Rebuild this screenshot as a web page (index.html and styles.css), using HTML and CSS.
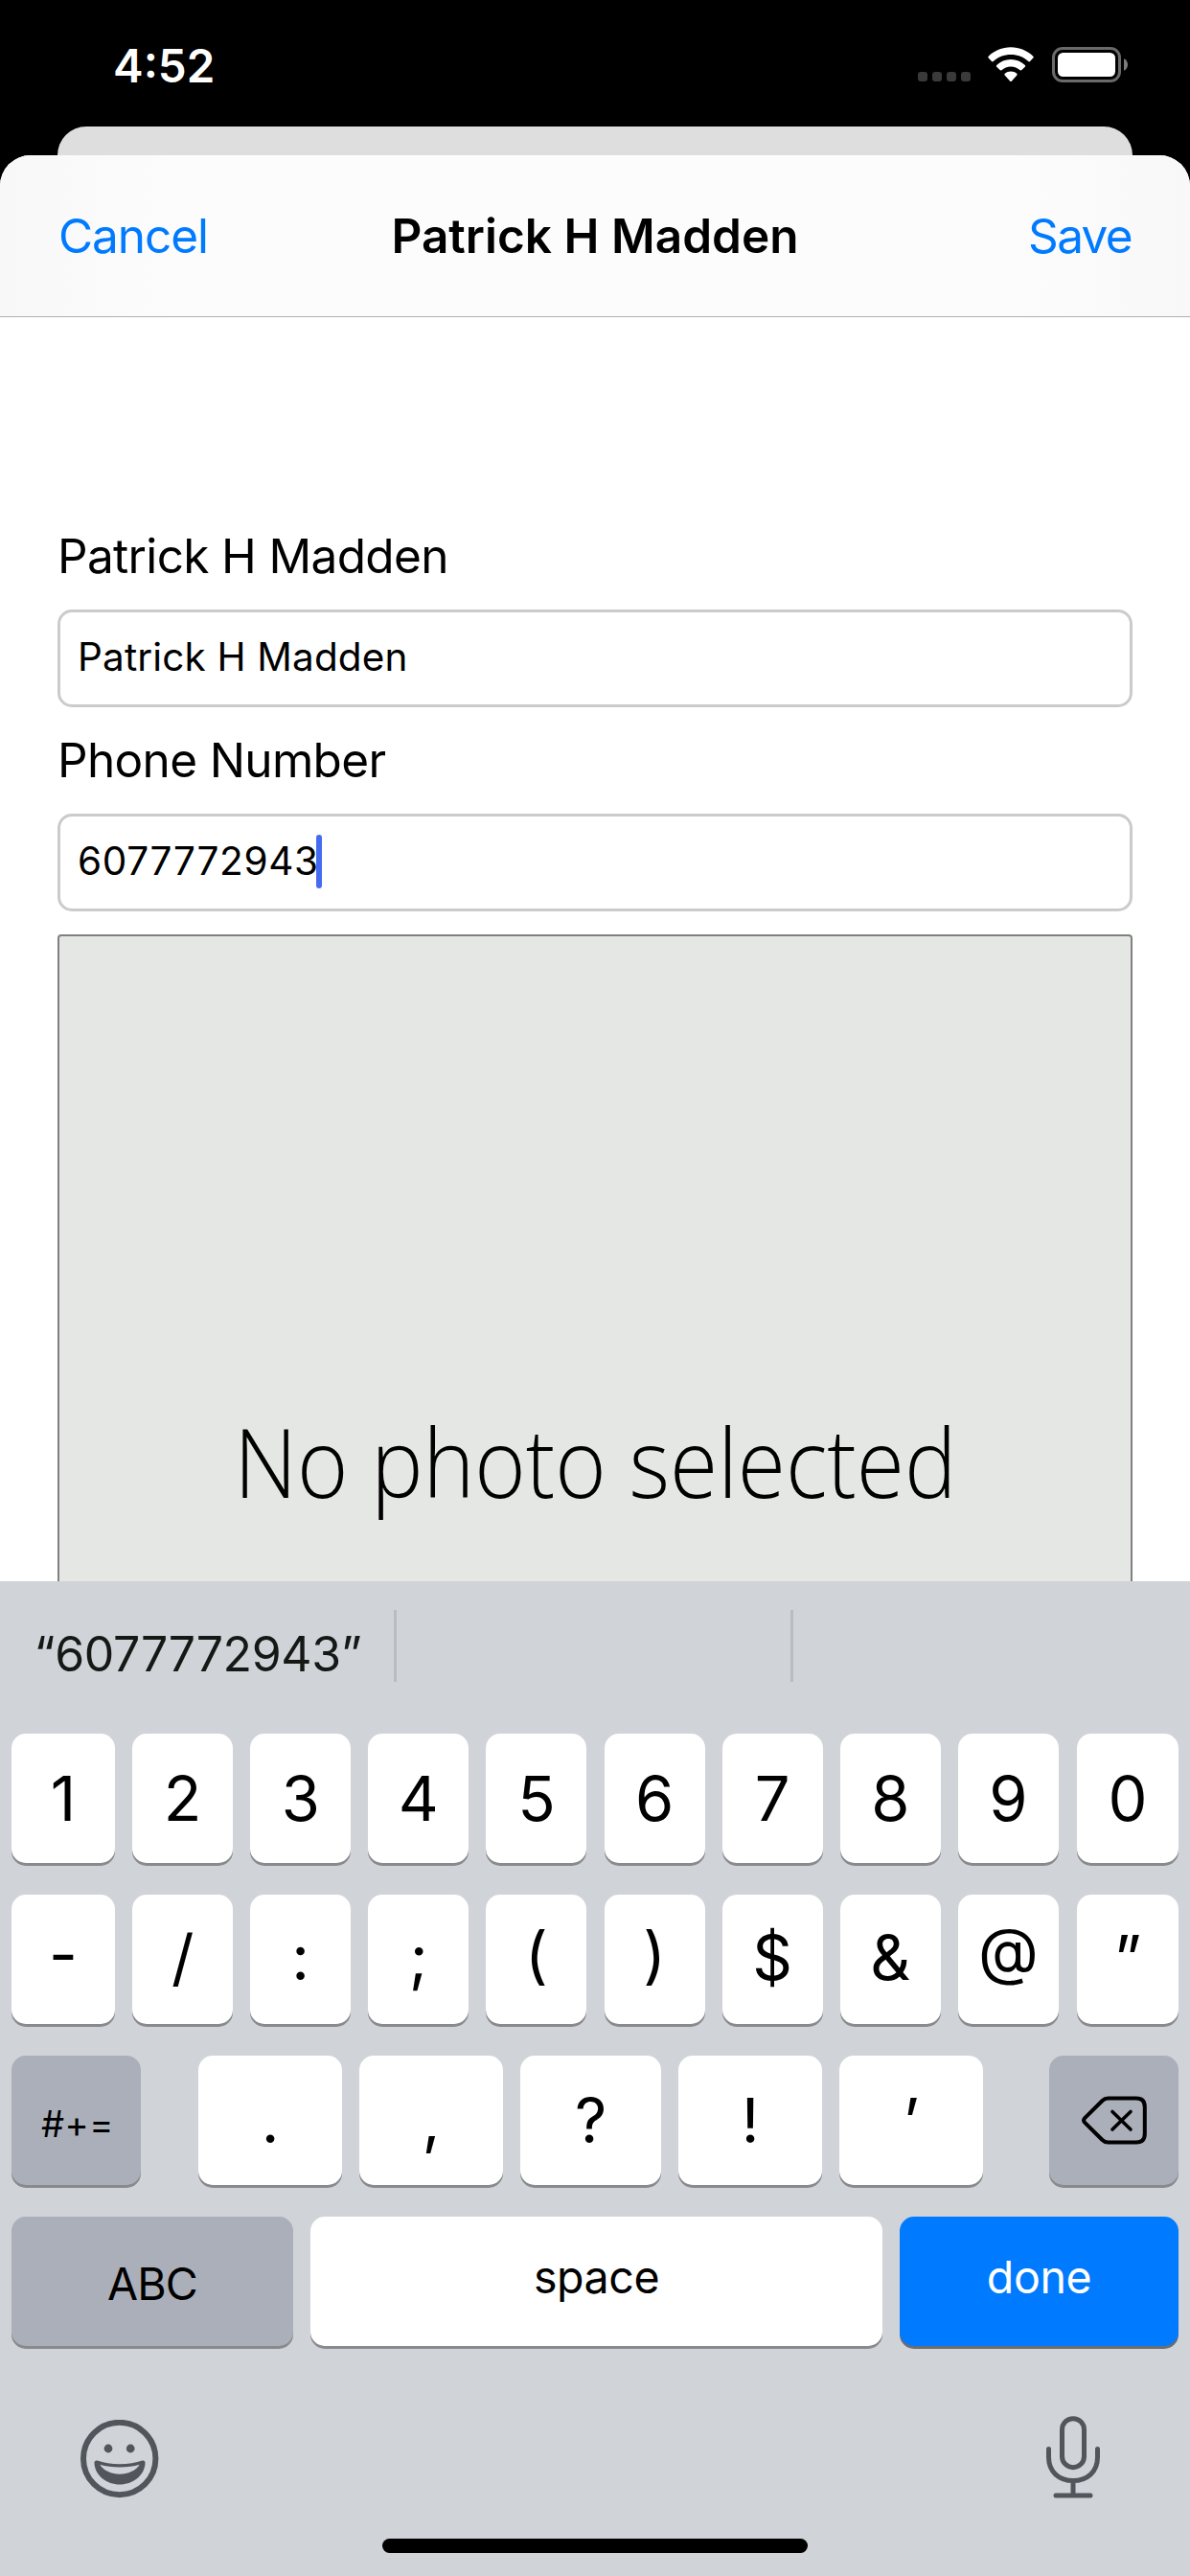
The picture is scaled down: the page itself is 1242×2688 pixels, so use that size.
FILE: index.html
```html
<!DOCTYPE html>
<html lang="en">
<head>
<meta charset="utf-8">
<title>Patrick H Madden</title>
<link rel="stylesheet" href="styles.css">
</head>
<body>
<div class="screen">
  <header class="status">
    <span class="time">4:52</span>
    <div class="indicators">
      <div class="dots"><i></i><i></i><i></i><i></i></div>
      <svg class="wifi" viewBox="0 0 48 37" width="48" height="37" fill="#fff">
        <path d="M24 0.3C33 0.3 41.300 3.900 47.300 9.700Q48.200 10.600 47.300 11.500L44 15Q43.200 15.800 42.300 15C37.500 10.600 31 8 24 8S10.500 10.600 5.700 15Q4.800 15.800 4 15L0.700 11.500Q-0.200 10.600 0.700 9.700C6.700 3.900 15 0.300 24 0.300Z"/>
        <path d="M24 13C29.700 13 34.900 15.200 38.800 18.900Q39.700 19.800 38.800 20.700L35.400 24.100Q34.500 25 33.600 24.200C31 21.900 27.700 20.500 24 20.500S17 21.900 14.400 24.200Q13.500 25 12.600 24.100L9.200 20.700Q8.300 19.800 9.200 18.900C13.100 15.200 18.300 13 24 13Z"/>
        <path d="M24 25.600C26.300 25.600 28.500 26.400 30.200 27.700Q31.200 28.600 30.300 29.600L24.800 35.700Q24 36.500 23.200 35.700L17.700 29.600Q16.800 28.600 17.800 27.700C19.500 26.400 21.700 25.600 24 25.600Z"/>
      </svg>
      <svg class="battery" viewBox="0 0 80 37" width="80" height="37">
        <rect x="2.500" y="1.500" width="69" height="34" rx="9.500" fill="none" stroke="#6a6a6a" stroke-width="3"/>
        <rect x="7" y="6" width="60" height="25" rx="5.500" fill="#fff"/>
        <path d="M76 12.300C78.600 13.200 80 15.700 80 18.500S78.600 23.800 76 24.700Z" fill="#7c7c7c"/>
      </svg>
    </div>
  </header>

  <div class="backsheet"></div>

  <main class="sheet">
    <nav class="navbar">
      <span class="action cancel">Cancel</span>
      <h1 class="title">Patrick H Madden</h1>
      <span class="action save">Save</span>
    </nav>
    <form class="form">
      <label class="label">Patrick H Madden</label>
      <div class="field">Patrick H Madden</div>
      <label class="label">Phone Number</label>
      <div class="field number">6077772943<i class="caret"></i></div>
      <div class="photo"><span class="placeholder">No photo selected</span></div>
    </form>
  </main>

  <section class="keyboard">
    <div class="suggestions">
      <div class="suggestion">“6077772943”</div>
      <div class="suggestion"></div>
      <div class="suggestion"></div>
    </div>
    <div class="keys">
      <div class="row ten">
        <b class="key">1</b><b class="key">2</b><b class="key">3</b><b class="key">4</b><b class="key">5</b><b class="key">6</b><b class="key">7</b><b class="key">8</b><b class="key">9</b><b class="key">0</b>
      </div>
      <div class="row ten symbols">
        <b class="key raised">-</b><b class="key">/</b><b class="key">:</b><b class="key">;</b><b class="key raised">(</b><b class="key raised">)</b><b class="key">$</b><b class="key">&amp;</b><b class="key raised">@</b><b class="key">”</b>
      </div>
      <div class="row punctuation">
        <b class="key grey more">#+=</b>
        <div class="middle">
          <b class="key">.</b><b class="key">,</b><b class="key">?</b><b class="key">!</b><b class="key">’</b>
        </div>
        <b class="key grey">
          <svg viewBox="0 0 68 51" width="68" height="51" fill="none" stroke="#000" stroke-width="4" stroke-linecap="round" stroke-linejoin="round">
            <path d="M27.500 2.500H57Q65.800 2.500 65.800 11.500V39.500Q65.800 48.500 57 48.500H27.500Q24 48.500 21.500 46L3.200 27.800Q1 25.500 3.200 23.200L21.500 5Q24 2.500 27.500 2.500Z"/>
            <path d="M32 16.500L51 35M51 16.500L32 35" stroke-width="3.600"/>
          </svg>
        </b>
      </div>
      <div class="row bottom">
        <b class="key grey abc">ABC</b>
        <b class="key word">space</b>
        <b class="key word done">done</b>
      </div>
    </div>
    <div class="tools">
      <svg viewBox="0 0 82 82" width="82" height="82">
        <circle cx="40.700" cy="40.500" r="37.700" fill="none" stroke="#50565c" stroke-width="6"/>
        <circle cx="29" cy="30" r="4.400" fill="#50565c"/>
        <circle cx="52.200" cy="30" r="4.400" fill="#50565c"/>
        <path fill="#50565c" fill-rule="evenodd" d="M17.500 42.600C24 45 32 46.200 41 46.200S58 45 64.500 42.600Q67.800 42.200 67.500 46C66.300 58.500 54.500 67.500 41 67.500S15.700 58.500 14.500 46Q14.200 42.200 17.500 42.600ZM20.300 46.800C24 53.200 32.500 56.700 41 56.700S58 53.200 61.700 46.800C55.500 48.600 48.500 49.400 41 49.400S26.500 48.600 20.300 46.800Z"/>
      </svg>
      <svg viewBox="0 0 58 86" width="58" height="86" fill="none" stroke="#50565c" stroke-width="5" stroke-linecap="round">
        <rect x="17.500" y="2.700" width="23" height="51" rx="11.500"/>
        <path d="M3.500 34.500V43C3.500 58.500 14.500 67.500 29 67.500S54.500 58.500 54.500 43V34.500M29 68V81M11 83H47"/>
      </svg>
    </div>
    <div class="home"></div>
  </section>
</div>
</body>
</html>
```
FILE: styles.css
```css
* {
  box-sizing: border-box;
}

body {
  margin: 0;
  background: #000;
  font-family: Inter, "Liberation Sans", sans-serif;
  color: #000;
}

.screen {
  width: 1242px;
  height: 2688px;
  display: flex;
  flex-direction: column;
  overflow: hidden;
}

/* Status bar */
.status {
  height: 132px;
  display: flex;
  justify-content: space-between;
  align-items: flex-start;
  padding: 49px 65px 0 118px;
}

.time {
  color: #fff;
  font-size: 47.5px;
  font-weight: 600;
  line-height: 39px;
}

.indicators {
  display: flex;
}

.dots {
  display: flex;
  gap: 5px;
  padding-top: 26px;
  margin-right: 18px;
}

.dots i {
  width: 10px;
  height: 10px;
  border-radius: 3px;
  background: #3a3a3a;
}

.wifi {
  margin-right: 18px;
}

/* Sheets */
.backsheet {
  height: 30px;
  margin: 0 60px;
  border-radius: 30px 30px 0 0;
  background: #dedede;
}

.sheet {
  height: 1488px;
  overflow: hidden;
  border-radius: 32px 32px 0 0;
  background: #fff;
}

.navbar {
  height: 169px;
  display: grid;
  grid-template-columns: 1fr auto 1fr;
  align-items: center;
  padding: 0 61px;
  border-bottom: 1px solid #b0b0b0;
  background: linear-gradient(90deg, #f8f8f8, #fcfcfc 180px, #fcfcfc 1062px, #f8f8f8);
}

.action {
  color: #007aff;
  font-size: 49.5px;
}

.cancel {
  letter-spacing: -1.07px;
}

.save {
  letter-spacing: -1.66px;
  justify-self: end;
}

.title {
  margin: 0;
  font-size: 49.5px;
  font-weight: 600;
  letter-spacing: 0.03px;
}

/* Form */
.form {
  display: flex;
  flex-direction: column;
  gap: 24px;
  padding: 218px 60px 0;
}

.label {
  font-size: 49.5px;
  line-height: 63px;
  letter-spacing: -0.66px;
}

.field {
  height: 102px;
  display: flex;
  align-items: center;
  padding: 0 18px 3px;
  border: 3px solid #cbcbcb;
  border-radius: 15px;
  font-size: 40.5px;
  letter-spacing: 0.15px;
}

.number {
  letter-spacing: 0.68px;
}

.caret {
  width: 6px;
  height: 56px;
  margin-left: -3px;
  border-radius: 3px;
  background: #456cf0;
}

.photo {
  height: 1122px;
  padding-top: 488px;
  border: 2px solid #808080;
  border-radius: 4px;
  background: #e5e7e5;
  text-align: center;
}

.placeholder {
  display: inline-block;
  font: 300 99.5px/120px "Open Sans", "Noto Sans", sans-serif;
  transform: scaleX(0.917);
  white-space: nowrap;
}

/* Keyboard */
.keyboard {
  height: 1038px;
  display: flex;
  flex-direction: column;
  background: #d0d3d8;
}

.suggestions {
  height: 75px;
  margin: 30px 0 54px;
  display: grid;
  grid-template-columns: 414px 414px 414px;
}

.suggestion {
  height: 75px;
  padding: 9px 0 0 2px;
  border-right: 3px solid #b9bcc1;
  color: #161816;
  font-size: 50px;
  line-height: 75px;
  letter-spacing: -0.38px;
  text-align: center;
}

.suggestion:last-child {
  border-right: 0;
}

.keys {
  display: flex;
  flex-direction: column;
  gap: 33px;
  padding: 0 12px;
}

.row {
  display: flex;
  justify-content: space-between;
  height: 135px;
}

.ten {
  display: grid;
  grid-template-columns: 108px repeat(8, 105px) 107px;
  gap: 18px;
}

.ten .key:last-child {
  margin-left: 1px;
}

.key {
  display: flex;
  align-items: center;
  justify-content: center;
  padding-bottom: 1px;
  border-radius: 15px;
  background: #fff;
  box-shadow: 0 3px 0 #898a8e;
  font-size: 65px;
  font-weight: 400;
}

.symbols .key {
  padding-bottom: 4px;
}

.raised {
  font-feature-settings: "case";
}

.grey {
  width: 135px;
  background: #abafb9;
}

.more {
  padding: 6px 0 0 3px;
  font-size: 38px;
  letter-spacing: 0.6px;
}

.middle {
  display: grid;
  grid-template-columns: 150px 150px 147px 150px 150px;
  gap: 18px;
  margin-left: -9px;
}

.abc {
  width: 294px;
  padding-top: 5px;
  font-size: 46.5px;
  letter-spacing: -0.85px;
}

.word {
  width: 597px;
  padding-bottom: 10px;
  font-size: 46.5px;
  letter-spacing: -0.41px;
}

.done {
  width: 291px;
  background: #007aff;
  box-shadow: 0 3px 0 #6a6d73;
  color: #fff;
}

.tools {
  display: flex;
  justify-content: space-between;
  padding: 73px 93px 0 84px;
}

.tools svg:first-child {
  margin-top: 4px;
}

.home {
  width: 444px;
  height: 15px;
  margin: 42px auto 0;
  border-radius: 8px;
  background: #000;
}
```
